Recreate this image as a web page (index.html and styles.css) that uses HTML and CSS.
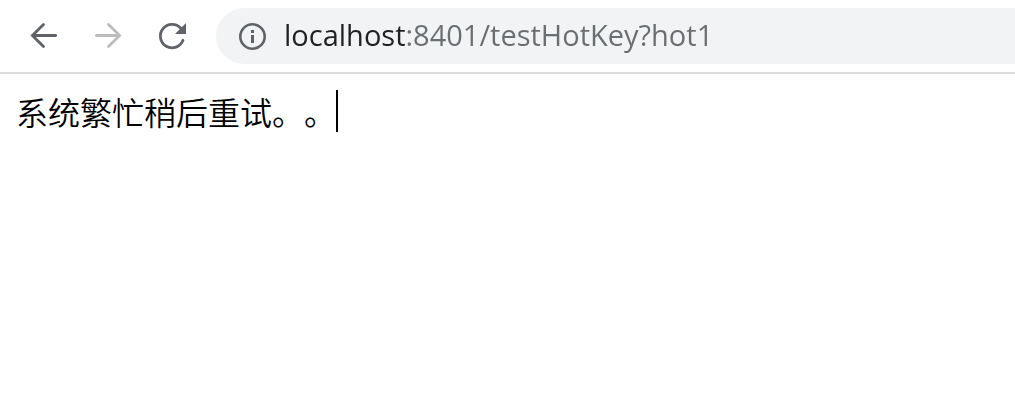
FILE: index.html
```html
<!DOCTYPE html>
<html lang="zh-CN">
<head>
<meta charset="utf-8">
<title>localhost:8401/testHotKey?hot1</title>
<link rel="stylesheet" href="styles.css">
</head>
<body>
<header class="toolbar">
  <nav class="nav">
    <button class="nav-button" type="button" aria-label="Back">
      <svg class="icon" viewBox="0 0 32 32" fill="none" stroke="currentColor" stroke-width="2.8" stroke-linecap="round"><path d="M27.7 15.5H4.5M15.5 4.4L4.4 15.5l11.1 11.1"/></svg>
    </button>
    <button class="nav-button" type="button" aria-label="Forward" disabled>
      <svg class="icon" viewBox="0 0 32 32" fill="none" stroke="currentColor" stroke-width="2.8" stroke-linecap="round"><path d="M4.4 15.5h23.2M16.5 4.4l11.1 11.1-11.1 11.1"/></svg>
    </button>
    <button class="nav-button" type="button" aria-label="Reload">
      <svg class="icon" viewBox="0 0 32 32" fill="none" stroke="currentColor" stroke-width="2.8" stroke-linecap="round"><path d="M27 20.3A11.7 11.7 0 1 1 24.8 8.3"/><path d="M30 3v11H19z" fill="currentColor" stroke="none"/></svg>
    </button>
  </nav>
  <div class="omnibox">
    <button class="site-info" type="button" aria-label="View site information">
      <svg class="icon" viewBox="0 0 32 32"><circle cx="16.5" cy="16.5" r="12.2" fill="none" stroke="currentColor" stroke-width="2.6"/><path d="M15 10h3v3h-3zM15 15h3v8h-3z" fill="currentColor"/></svg>
    </button>
    <input class="url" type="text" aria-label="Address" value="localhost:8401/testHotKey?hot1" spellcheck="false">
  </div>
</header>
<main class="page">
  <p class="message">系统繁忙稍后重试。。</p>
</main>
</body>
</html>
```
FILE: styles.css
```css
* {
  box-sizing: border-box;
}

body {
  margin: 0;
  background: #fff;
  color: #000;
}

button {
  padding: 0;
  border: 0;
  background: none;
  color: #5f6368;
}

.toolbar {
  display: flex;
  align-items: center;
  gap: 12px;
  padding: 8px 0 8px 12px;
  border-bottom: 2px solid #dadbdc;
}

.nav {
  display: flex;
}

.nav-button {
  display: grid;
  place-items: center;
  width: 64px;
  height: 56px;
}

.nav-button:disabled {
  color: #babcbe;
}

.icon {
  display: block;
  width: 32px;
  height: 32px;
}

.omnibox {
  display: flex;
  flex: 1;
  align-items: center;
  gap: 16px;
  min-width: 0;
  height: 56px;
  padding-left: 20px;
  border-radius: 28px 0 0 28px;
  background: #f1f3f4;
}

.url {
  flex: 1;
  min-width: 0;
  height: 56px;
  padding: 0 0 4px;
  border: 0;
  outline: 0;
  background: linear-gradient(to right, #202124 121px, #6b6e71 121px);
  background-clip: text;
  -webkit-background-clip: text;
  color: transparent;
  font: 29px "Segoe UI", "Open Sans", "Noto Sans", sans-serif;
}

.page {
  display: flex;
  padding: 16px;
}

.message {
  margin: 0;
  border-right: 2px solid #000;
  font: 32px/42px "Noto Sans CJK SC", sans-serif;
  font-weight: 350;
  text-spacing-trim: space-all;
}
```
